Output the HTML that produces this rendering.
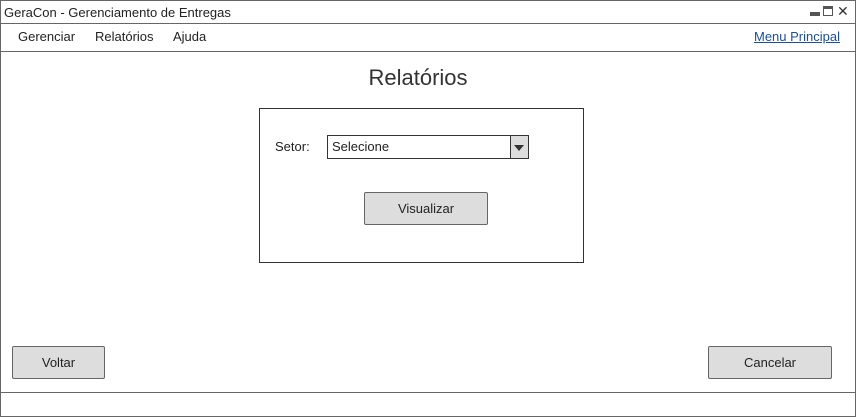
<!DOCTYPE html>
<html><head><meta charset="utf-8"><style>
*{margin:0;padding:0;box-sizing:border-box}
body{width:856px;height:417px;background:#fff;font-family:"Liberation Sans",sans-serif;color:#222;position:relative;overflow:hidden}
.a{position:absolute}
.btn{position:absolute;background:#ddd;border:1px solid #666;border-radius:2px;font-size:13px;display:flex;align-items:center;justify-content:center}
</style></head><body>
<div class="a" style="left:0;top:0;width:856px;height:417px;border:1px solid #666"></div>
<div class="a" style="left:0;top:23px;width:856px;border-top:1px solid #666"></div>
<div class="a" style="left:0;top:51px;width:856px;border-top:1px solid #666"></div>
<div class="a" style="left:0;top:392px;width:856px;border-top:1px solid #666"></div>
<div class="a" style="left:4px;top:5px;font-size:13px">GeraCon - Gerenciamento de Entregas</div>
<div class="a" style="left:810px;top:12px;width:10px;height:4px;background:#555"></div>
<div class="a" style="left:823px;top:6px;width:10px;height:10px;border:1px solid #555;border-top:3px solid #555"></div>
<div class="a" style="left:837px;top:3px;font-size:14px;color:#333">✕</div>
<div class="a" style="left:18px;top:29px;font-size:13px">Gerenciar</div>
<div class="a" style="left:95px;top:29px;font-size:13px">Relatórios</div>
<div class="a" style="left:173px;top:29px;font-size:13px">Ajuda</div>
<div class="a" style="left:754px;top:29px;font-size:13px;color:#1a4f9c;text-decoration:underline">Menu Principal</div>
<div class="a" style="left:0;width:836px;top:65px;text-align:center;font-size:22px;color:#333">Relatórios</div>
<div class="a" style="left:259px;top:108px;width:325px;height:155px;border:1px solid #333"></div>
<div class="a" style="left:275px;top:139px;font-size:13px">Setor:</div>
<div class="a" style="left:327px;top:135px;width:202px;height:24px;border:1px solid #333"></div>
<div class="a" style="left:510px;top:136px;width:18px;height:22px;background:#ddd;border-left:1px solid #333"></div>
<div class="a" style="left:514px;top:145px;width:0;height:0;border-left:5px solid transparent;border-right:5px solid transparent;border-top:6px solid #333"></div>
<div class="a" style="left:332px;top:139px;font-size:13px">Selecione</div>
<div class="btn" style="left:364px;top:192px;width:124px;height:33px">Visualizar</div>
<div class="btn" style="left:12px;top:346px;width:93px;height:33px">Voltar</div>
<div class="btn" style="left:708px;top:346px;width:124px;height:33px">Cancelar</div>
</body></html>
